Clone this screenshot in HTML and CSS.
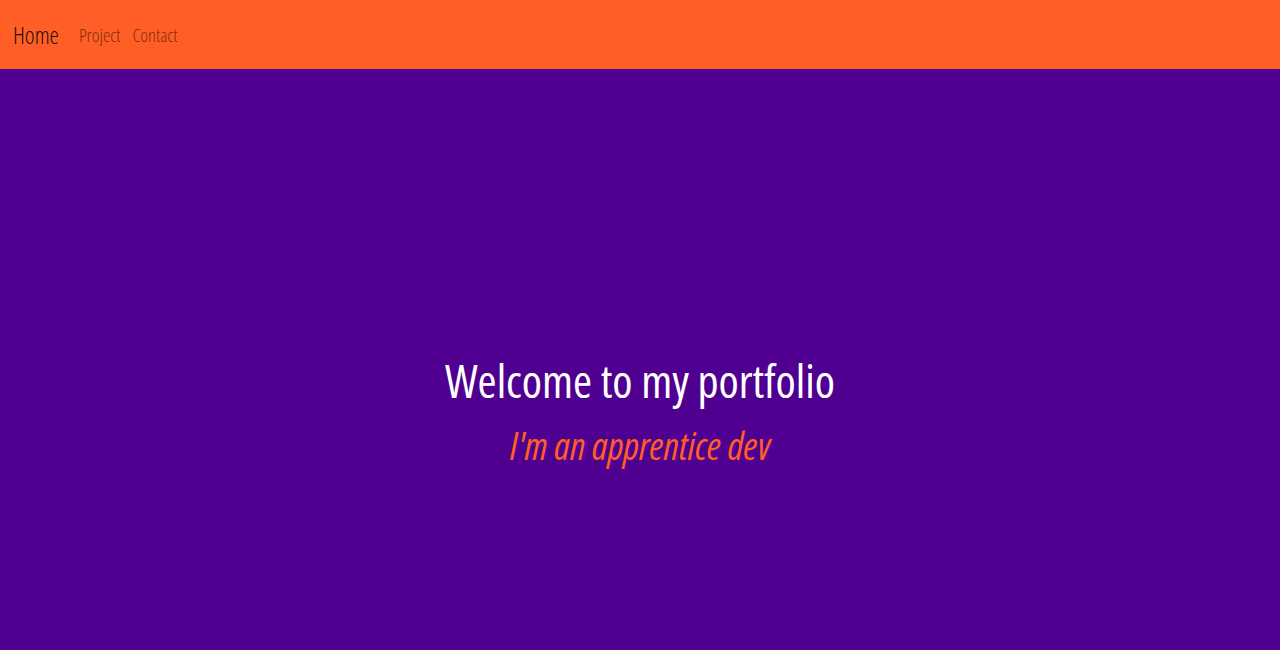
FILE: index.html
```html
<!DOCTYPE html>
<html lang="en">
<head>
<meta charset="utf-8">
<title>Portfolio</title>
<link rel="stylesheet" href="styles.css">
</head>
<body>
<nav class="navbar">
  <a class="brand" href="#">Home</a>
  <ul class="nav-links">
    <li><a href="#">Project</a></li>
    <li><a href="#">Contact</a></li>
  </ul>
</nav>
<header class="hero">
  <h1 class="hero-title">Welcome to my portfolio</h1>
  <h2 class="hero-sub">I'm an apprentice dev</h2>
</header>
</body>
</html>
```
FILE: styles.css
```css
html, body {
  margin: 0;
  padding: 0;
  height: 100%;
}
body {
  font-family: "Open Sans", "DejaVu Sans", sans-serif;
  font-stretch: 75%;
  background: #4f0090;
  overflow: hidden;
}
.navbar {
  height: 69px;
  background: #ff5e26;
  display: flex;
  align-items: center;
  padding: 0 13px;
  box-sizing: border-box;
}
.brand {
  color: rgba(0, 0, 0, 0.9);
  text-decoration: none;
  font-size: 23.5px;
  font-weight: 300;
  margin-right: 20px;
}
.nav-links {
  list-style: none;
  display: flex;
  gap: 12px;
  margin: 0;
  padding: 0;
}
.nav-links a {
  color: rgba(0, 0, 0, 0.55);
  text-decoration: none;
  font-size: 18.5px;
  font-weight: 300;
}
.hero {
  display: flex;
  flex-direction: column;
  align-items: center;
  padding-top: 284px;
}
.hero-title {
  margin: 0;
  color: #fff;
  font-weight: 500;
  font-size: 46px;
  line-height: 1.2;
}
.hero-sub {
  margin: 15px 0 0;
  color: #ff5e26;
  font-style: italic;
  font-weight: 500;
  font-size: 38px;
  line-height: 1.2;
}
```
